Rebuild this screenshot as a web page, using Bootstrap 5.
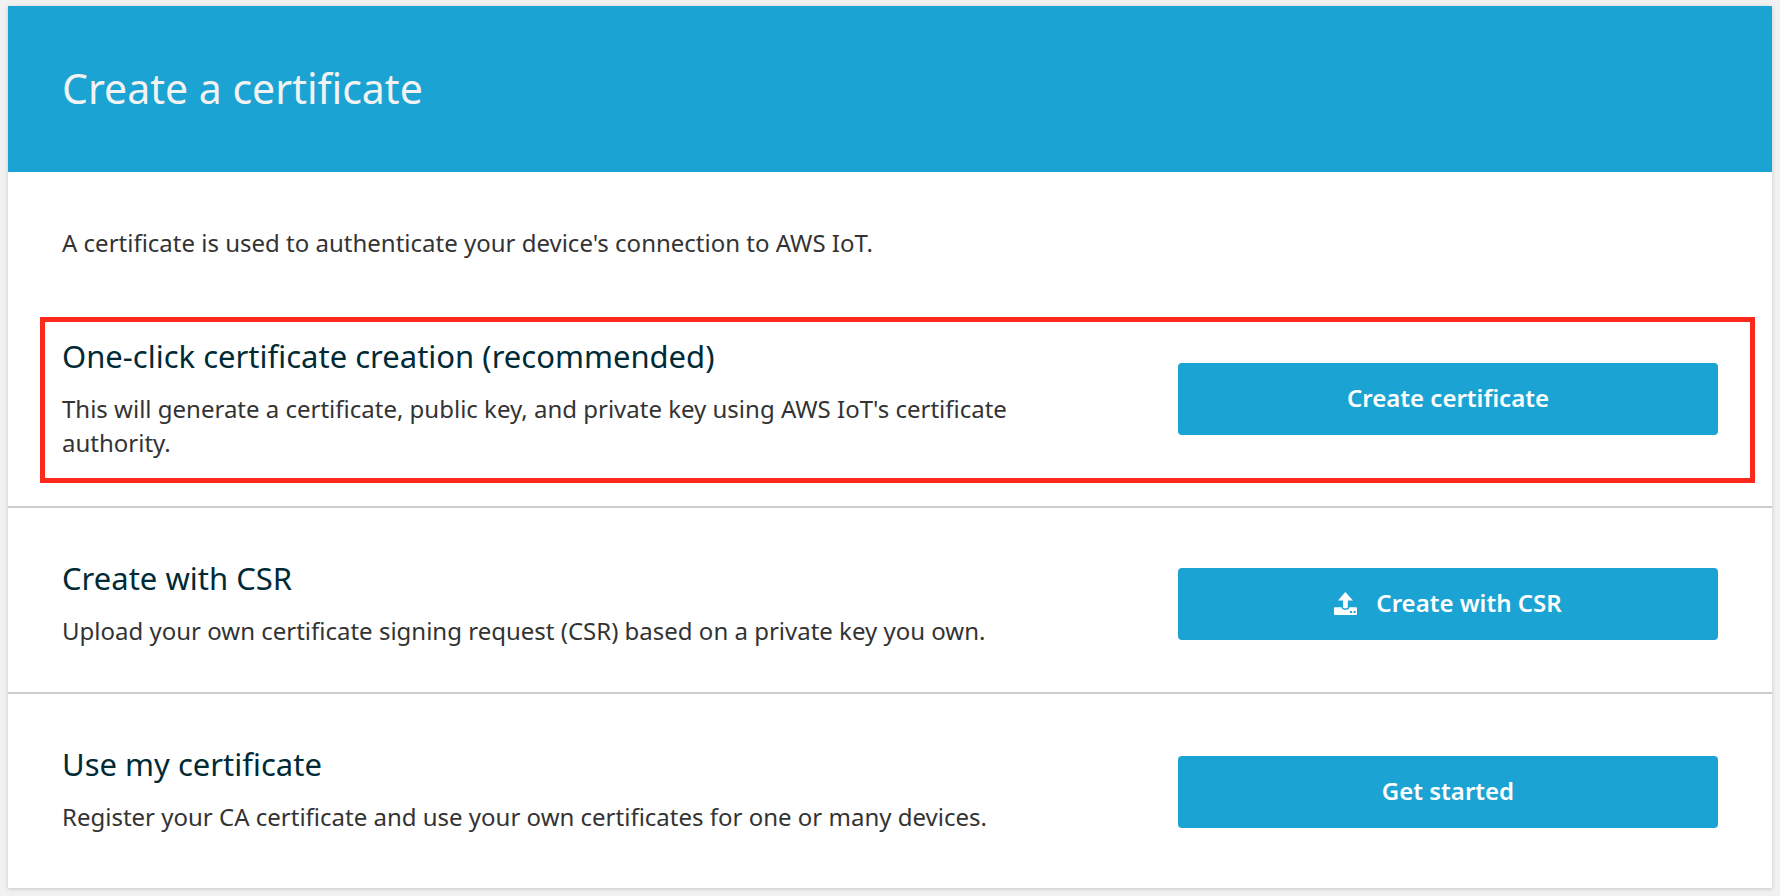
<!DOCTYPE html>
<html lang="en">
<head>
<meta charset="utf-8">
<meta name="viewport" content="width=device-width, initial-scale=1">
<title>Create a certificate</title>
<link href="https://cdn.jsdelivr.net/npm/bootstrap@5.3.0/dist/css/bootstrap.min.css" rel="stylesheet">
<style>
body{background:#f1f1f1;font-family:"Noto Sans","Open Sans",sans-serif;color:#333;font-size:24px;line-height:34px}
.panel{background:#fff;margin:6px 8px 8px;box-shadow:0 1px 4px rgba(0,0,0,.18)}
.panel p{font-weight:450}
.panel-head{background:#1ba4d3;color:#f2f2f2;padding:52px 54px 54px}
.panel-head h1{font-size:41px;line-height:60px;margin:0;font-weight:400}
h2{font-size:31px;line-height:36px;color:#002b36;margin:0 0 18px;font-weight:400}
.intro{padding:54px 54px 57px;margin:0}
.option{padding:52px 54px 44px;border-top:2px solid #ccc}
.option:last-child{padding-bottom:50px}
.option:last-child .option-text{padding-bottom:4px}
.highlight{border:5px solid #fd2a1c;margin:0 17px 23px 32px;padding:16px 32px 18px 17px}
.option-text{max-width:980px}
.option-btn{width:540px;max-width:100%;min-height:72px;padding:0 12px 2px;font-size:24px;font-weight:600;border:0;border-radius:4px;
--bs-btn-color:#fff;--bs-btn-bg:#1ba4d3;--bs-btn-hover-color:#fff;--bs-btn-hover-bg:#1690bb;--bs-btn-active-color:#fff;--bs-btn-active-bg:#127ba0}
.upload-icon{width:23px;height:23px;margin-right:19px}
</style>
</head>
<body>
<main class="panel">
  <header class="panel-head"><h1>Create a certificate</h1></header>
  <p class="intro">A certificate is used to authenticate your device's connection to AWS IoT.</p>
  <section class="highlight d-flex flex-wrap flex-xl-nowrap align-items-center justify-content-between">
    <div class="option-text">
      <h2>One-click certificate creation (recommended)</h2>
      <p class="m-0">This will generate a certificate, public key, and private key using AWS IoT's certificate authority.</p>
    </div>
    <button type="button" class="btn option-btn flex-shrink-0">Create certificate</button>
  </section>
  <section class="option d-flex flex-wrap flex-xl-nowrap align-items-center justify-content-between">
    <div class="option-text">
      <h2>Create with CSR</h2>
      <p class="m-0">Upload your own certificate signing request (CSR) based on a private key you own.</p>
    </div>
    <button type="button" class="btn option-btn flex-shrink-0 d-inline-flex align-items-center justify-content-center">
      <svg class="upload-icon" viewBox="0 0 23 23" fill="currentColor" aria-hidden="true">
        <path d="M11.3 0 19 8.6H13.8V15Q13.8 16.3 12.5 16.3H10.3Q9 16.3 9 15V8.6H4Z"/>
        <path fill-rule="evenodd" d="M1 15.3H7.4Q8 17.7 10 17.7H13Q15 17.7 15.5 15.3H22Q23 15.3 23 16.3V22Q23 23 22 23H1Q0 23 0 22V16.3Q0 15.3 1 15.3ZM16 19V21H18V19ZM19.6 19V21H21.6V19Z"/>
      </svg>
      <span>Create with CSR</span>
    </button>
  </section>
  <section class="option d-flex flex-wrap flex-xl-nowrap align-items-center justify-content-between">
    <div class="option-text">
      <h2>Use my certificate</h2>
      <p class="m-0">Register your CA certificate and use your own certificates for one or many devices.</p>
    </div>
    <button type="button" class="btn option-btn flex-shrink-0">Get started</button>
  </section>
</main>
<script src="https://cdn.jsdelivr.net/npm/bootstrap@5.3.0/dist/js/bootstrap.bundle.min.js"></script>
</body>
</html>
